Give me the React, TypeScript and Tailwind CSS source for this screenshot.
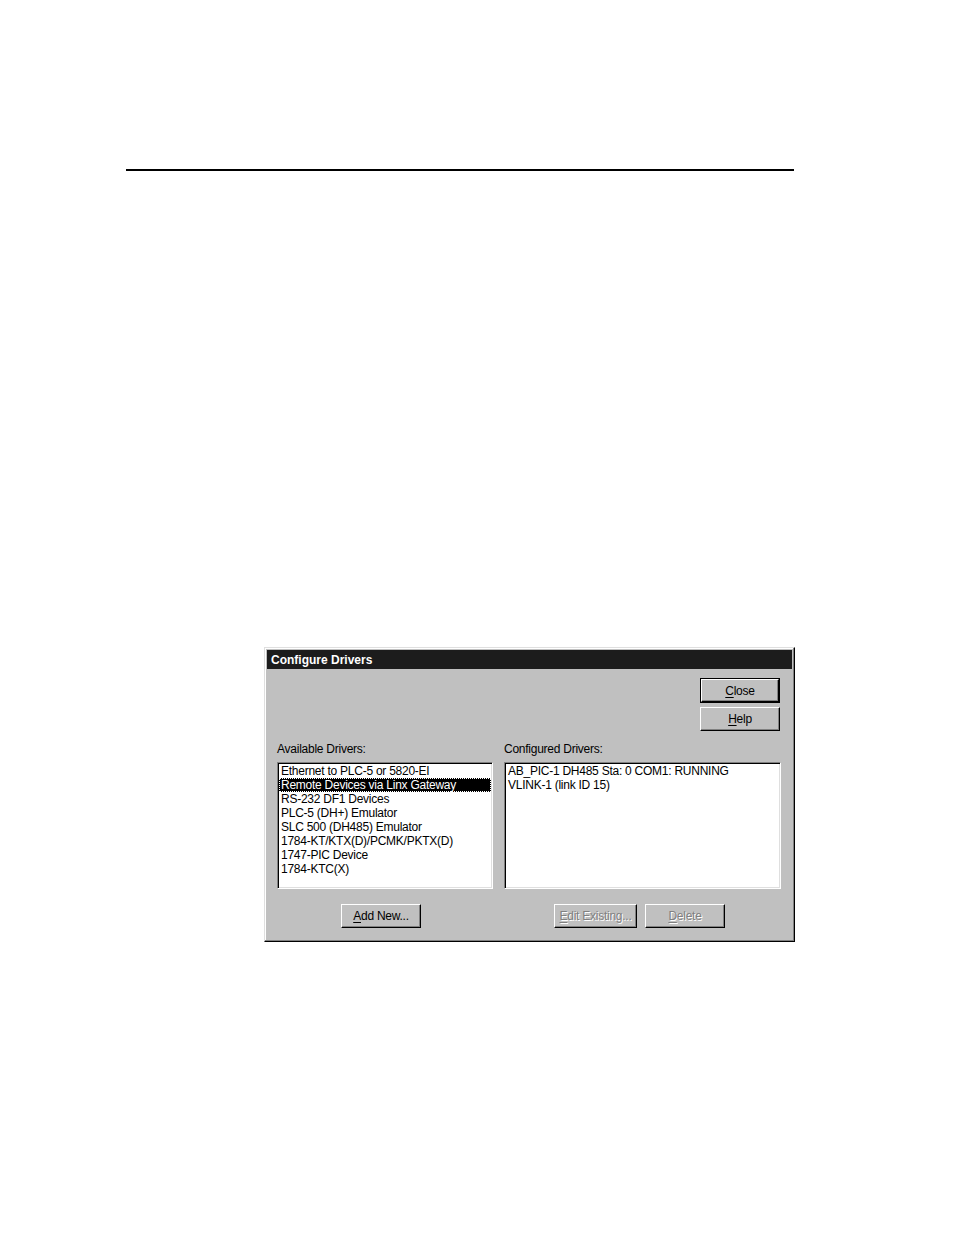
import React from 'react';

const font = { fontFamily: '"Liberation Sans", Arial, sans-serif' };

const available = [
  'Ethernet to PLC-5 or 5820-EI',
  'Remote Devices via Linx Gateway',
  'RS-232 DF1 Devices',
  'PLC-5 (DH+) Emulator',
  'SLC 500 (DH485) Emulator',
  '1784-KT/KTX(D)/PCMK/PKTX(D)',
  '1747-PIC Device',
  '1784-KTC(X)',
];

const configured = ['AB_PIC-1 DH485 Sta: 0 COM1: RUNNING', 'VLINK-1 (link ID 15)'];

interface BtnProps {
  mnemonic: string;
  rest: string;
  width: string;
  isDefault?: boolean;
  disabled?: boolean;
}

const Win95Button: React.FC<BtnProps> = ({ mnemonic, rest, width, isDefault, disabled }) => {
  const label = (
    <span
      className={
        disabled
          ? 'text-[#808080] [text-shadow:1px_1px_0_#ffffff]'
          : 'text-black'
      }
    >
      <span className="underline underline-offset-[2px]">{mnemonic}</span>
      {rest}
    </span>
  );
  const face = (
    <div className="flex h-full w-full items-center justify-center border-t border-l border-white border-r border-b border-r-black border-b-black bg-[#c0c0c0] shadow-[inset_-1px_-1px_0_#808080] text-[12px] tracking-[-0.25px] leading-none">
      {label}
    </div>
  );
  if (isDefault) {
    return <div className={`${width} h-[25px] border border-black`}>{face}</div>;
  }
  return <div className={`${width} h-[24px]`}>{face}</div>;
};

const ListBox: React.FC<{ items: string[]; selected?: number; width: string }> = ({ items, selected, width }) => (
  <div className={`${width} h-[127px] border-t border-l border-[#808080] border-r border-b border-r-white border-b-white bg-white shadow-[inset_1px_1px_0_#000000,inset_-1px_-1px_0_#dfdfdf] px-[1px] pt-[1px]`}>
    {items.map((item, i) => (
      <div
        key={item}
        className={`h-[14px] px-[2px] text-[12px] tracking-[-0.25px] leading-[14px] whitespace-nowrap ${
          i === selected ? 'bg-black text-white outline-1 outline-dotted outline-white -outline-offset-1' : 'text-black'
        }`}
      >
        {item}
      </div>
    ))}
  </div>
);

export default function App() {
  return (
    <div className="min-h-[1235px] w-[954px] bg-white" style={font}>
      <div className="h-[169px]" />
      <div className="ml-[126px] h-[2px] w-[668px] bg-black" />
      <div className="h-[476px]" />

      <div className="ml-[264px] h-[295px] w-[531px] border-t border-l border-[#dfdfdf] border-r border-b border-r-black border-b-black bg-[#c0c0c0] shadow-[inset_-1px_-1px_0_#808080,inset_1px_1px_0_#ffffff] p-[2px]">
        <div className="flex h-[19px] items-center bg-[#1c1c1c] pl-[4px] text-[12px] font-bold text-white">
          Configure Drivers
        </div>

        <div className="flex justify-end pr-[12px] pt-[9px]">
          <div className="flex flex-col gap-[4px]">
            <Win95Button mnemonic="C" rest="lose" width="w-[80px]" isDefault />
            <Win95Button mnemonic="H" rest="elp" width="w-[80px]" />
          </div>
        </div>

        <div className="mt-[11px] flex pl-[10px]">
          <div className="flex flex-col">
            <div className="h-[20px] text-[12px] tracking-[-0.25px] leading-[14px] text-black">Available Drivers:</div>
            <ListBox items={available} selected={1} width="w-[216px]" />
          </div>
          <div className="ml-[11px] flex flex-col">
            <div className="h-[20px] text-[12px] tracking-[-0.25px] leading-[14px] text-black">Configured Drivers:</div>
            <ListBox items={configured} width="w-[277px]" />
          </div>
        </div>

        <div className="mt-[15px] flex">
          <div className="ml-[74px]">
            <Win95Button mnemonic="A" rest="dd New..." width="w-[80px]" />
          </div>
          <div className="ml-[133px]">
            <Win95Button mnemonic="E" rest="dit Existing..." width="w-[83px]" disabled />
          </div>
          <div className="ml-[8px]">
            <Win95Button mnemonic="D" rest="elete" width="w-[80px]" disabled />
          </div>
        </div>
      </div>
    </div>
  );
}
